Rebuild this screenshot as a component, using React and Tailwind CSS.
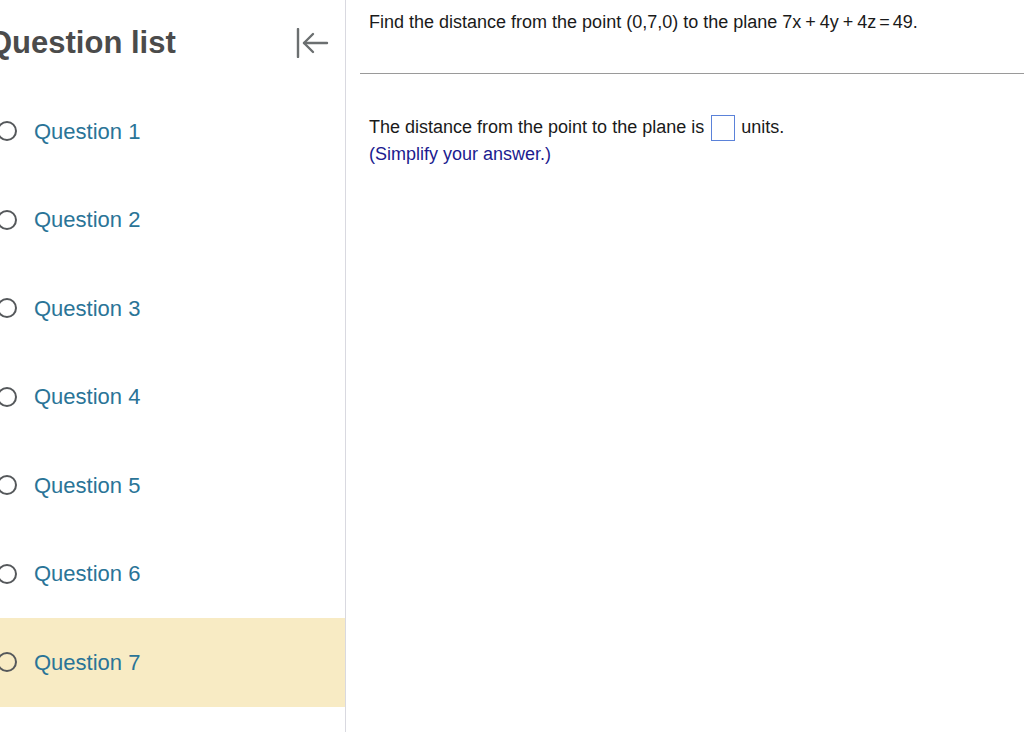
import React from 'react';

const questions = [1, 2, 3, 4, 5, 6, 7];

function CollapseIcon() {
  return (
    <svg width="34" height="30" viewBox="0 0 34 30" fill="none" stroke="#6b6f70" strokeWidth="2.4" strokeLinecap="round" strokeLinejoin="round">
      <line x1="3" y1="1" x2="3" y2="29" />
      <line x1="9" y1="15" x2="32" y2="15" />
      <polyline points="18,6 9,15 18,24" />
    </svg>
  );
}

export default function App() {
  const current = 7;
  return (
    <div className="flex h-[732px] w-[1024px] overflow-hidden bg-white" style={{ fontFamily: '"Liberation Sans", Arial, sans-serif' }}>
      {/* Sidebar */}
      <aside className="w-[346px] shrink-0 border-r border-[#d9d9e0] overflow-hidden">
        <div className="flex h-[87px] items-start justify-between pr-[16px]">
          <h1 className="ml-[-12px] mt-[24px] whitespace-nowrap text-[31px] font-bold leading-[38px] text-[#4b4b4b]">
            Question list
          </h1>
          <div className="mt-[28px]">
            <CollapseIcon />
          </div>
        </div>
        <ul>
          {questions.map(n => (
            <li
              key={n}
              className={`flex h-[88.5px] items-center ${n === current ? 'bg-[#f8ebc4]' : ''}`}
            >
              <span className="ml-[-3px] h-[20px] w-[20px] shrink-0 rounded-full border-2 border-[#55585b]" />
              <span className="ml-[17px] text-[22px] text-[#2a7497]">Question {n}</span>
            </li>
          ))}
        </ul>
      </aside>

      {/* Main */}
      <main className="flex-1 pl-[14px]">
        <p className="pl-[9px] pt-[9px] text-[18px] leading-[27px] text-[#1a1a1a]">
          Find the distance from the point (0,7,0) to the plane 7x<span className="mx-[4px]">+</span>4y<span className="mx-[4px]">+</span>4z<span className="mx-[3px]">=</span>49.
        </p>
        <hr className="mt-[37px] border-t border-[#9a9a9a]" />
        <div className="pl-[9px] pt-[40px] text-[18px] leading-[27px] text-[#1a1a1a]">
          <div className="flex items-center">
            <span>The distance from the point to the plane is</span>
            <span className="ml-[7px] mr-[6px] inline-block h-[26px] w-[24px] border border-[#5b82d9]" />
            <span>units.</span>
          </div>
          <p className="text-[#1b1b8f]">(Simplify your answer.)</p>
        </div>
      </main>
    </div>
  );
}
